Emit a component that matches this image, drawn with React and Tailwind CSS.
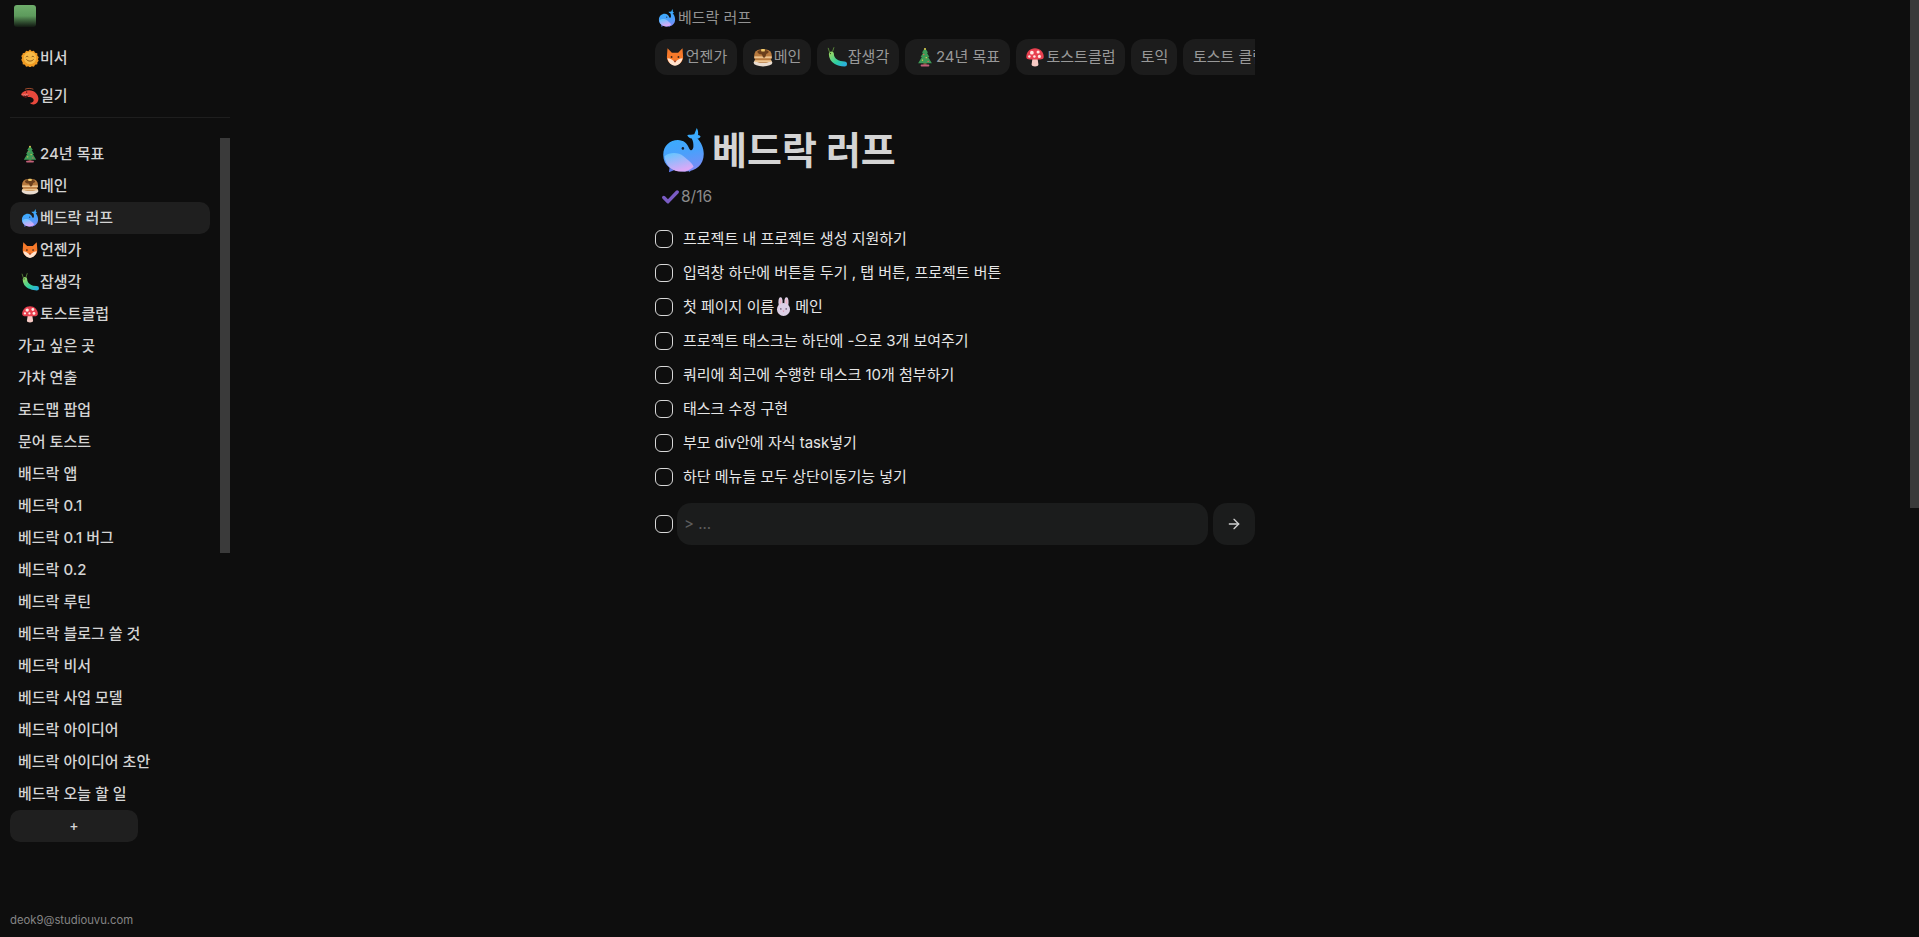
import React from 'react';
import { ArrowRight } from 'lucide-react';

const FONT = '[font-family:Inter,"Noto_Sans_CJK_KR",sans-serif]';

// Fluent style emoji, redrawn small because no emoji font is available
function Emoji({ name, size = 18 }) {
  const shapes = {
    whale: (
      <g transform="translate(1.600 0) scale(0.9 1)">
        <defs>
          <linearGradient id="whaleBody" x1="0.3" y1="0" x2="0.5" y2="1">
            <stop offset="0" stopColor="#2fb4ff" />
            <stop offset="0.6" stopColor="#4aa0fb" />
            <stop offset="1" stopColor="#7b8cf5" />
          </linearGradient>
          <linearGradient id="whaleBelly" x1="0" y1="0" x2="0.4" y2="1">
            <stop offset="0" stopColor="#5cc8ff" />
            <stop offset="1" stopColor="#dca8f7" />
          </linearGradient>
        </defs>
        <path d="M5 28l-.500 3.500 4-1.500zM19 29l2 2.500 1.500-3.500z" fill="#5f78e8" />
        <path d="M0 19C0 12.500 5.500 8.500 11.500 8.500 16 8.500 19 11 20.500 14.500 21.500 16.500 23.500 16 23.800 13.500 24 11 23.500 9 22.500 7.500 21 7.500 19.500 6.500 19 5 21 4.800 23 5 24.500 4.500L26.500 0C27.500 1.500 27.800 3.500 27.500 5 28.500 5.300 29 5.500 29.500 6 29 7 28 7.500 27 7.500 30 10.500 32 14 32 18.500 32 26 26 31 17 31 7 31 0 27 0 19z" fill="url(#whaleBody)" />
        <path d="M1 20C5 17 12 17 16 20 20 23 23 25 24 27.500 21 30 18 31 15 31 7 31 2 27 1 20z" fill="url(#whaleBelly)" />
        <circle cx="15.500" cy="14.500" r="1" fill="#123" />
      </g>
    ),
    fox: (
      <>
        <path d="M4 2l7 7h10l7-7 1 14c0 7-6 13-13 13S3 23 3 16z" fill="#f6792a" />
        <path d="M4 18c4 0 8 2 12 7 4-5 8-7 12-7-1 6-6 12-12 12S5 24 4 18z" fill="#ffe3cf" />
        <circle cx="10.500" cy="16" r="1.500" fill="#3a2418" />
        <circle cx="21.500" cy="16" r="1.500" fill="#3a2418" />
        <path d="M14 22h4l-2 2.500z" fill="#6a2a3a" />
      </>
    ),
    pancake: (
      <>
        <ellipse cx="16" cy="25" rx="15" ry="6" fill="#e9dcd0" />
        <rect x="2" y="4" width="28" height="21" rx="9" fill="#b87a3e" />
        <rect x="2" y="15" width="28" height="3" fill="#eec48e" />
        <rect x="2" y="21" width="28" height="3" rx="1.500" fill="#eec48e" />
        <path d="M7 7c3-3 15-3 18 0 0 4-3 2-4 5s-1 5-3.500 5-2-4-3.500-5-3 0-4-1-3-1-3-4z" fill="#6b3f1c" />
        <rect x="13" y="3" width="6" height="4" rx="1" fill="#f0c86a" />
      </>
    ),
    caterpillar: (
      <>
        <defs>
          <linearGradient id="catBody" x1="0" y1="0" x2="1" y2="1">
            <stop offset="0" stopColor="#8ed66a" />
            <stop offset="0.6" stopColor="#2fcf9f" />
            <stop offset="1" stopColor="#2ab1d8" />
          </linearGradient>
        </defs>
        <path d="M7 11c0 6 3 10 8 13 3 2 8 3 13 3" fill="none" stroke="url(#catBody)" strokeWidth="8" strokeLinecap="round" />
        <path d="M4 8L2 2M9 7l2-6" stroke="#5b8a3c" strokeWidth="1.500" strokeLinecap="round" />
        <circle cx="5.500" cy="10.500" r="1" fill="#24351c" />
      </>
    ),
    tree: (
      <>
        <rect x="13.500" y="25" width="5" height="4" fill="#7b4f35" />
        <rect x="9" y="28" width="14" height="3" rx="1.500" fill="#c2607a" />
        <path d="M16 1l5 8h-2l4 7h-2l6 10H5l6-10H9l4-7h-2z" fill="#3d9a57" />
        <circle cx="16" cy="3" r="1.500" fill="#f7cd4a" />
        <circle cx="14" cy="12" r="1.100" fill="#f45c5c" />
        <circle cx="18" cy="17" r="1.100" fill="#f7cd4a" />
        <circle cx="12" cy="21" r="1.100" fill="#f7cd4a" />
        <circle cx="21" cy="23" r="1.100" fill="#f45c5c" />
      </>
    ),
    mushroom: (
      <>
        <path d="M12 18h8l1.500 10c0 2-2.500 3-5.500 3s-5.500-1-5.500-3z" fill="#f7c9c4" />
        <path d="M2 16C2 8 8 2 16 2s14 6 14 14c0 3-3 4-6 4H8c-3 0-6-1-6-4z" fill="#e8404f" />
        <circle cx="11" cy="9" r="3" fill="#ffe9e4" />
        <circle cx="21" cy="8" r="2.500" fill="#ffe9e4" />
        <circle cx="23" cy="15" r="2.500" fill="#ffe9e4" />
        <circle cx="7" cy="15" r="2" fill="#ffe9e4" />
        <circle cx="15" cy="15" r="2" fill="#ffe9e4" />
      </>
    ),
    sun: (
      <>
        <path d="M16 1l3 3 4-1 2 3.500 4 1v4l2.500 3-1.500 3.500 1.500 3-2.500 3v3l-4 1-2 3.500-4-1-3 2.500-3-2.500-4 1-2-3.500-4-1v-3L.500 19l1.500-3-1.500-3.500L3 9.500v-2l4-1L9 3l4 1z" fill="#f09a22" />
        <circle cx="16" cy="16" r="11" fill="#f7bb48" />
        <path d="M9 14c1-1.500 3-1.500 4 0M19 14c1-1.500 3-1.500 4 0M10 19c3 3.500 9 3.500 12 0" fill="none" stroke="#7a4a14" strokeWidth="1.500" strokeLinecap="round" />
      </>
    ),
    shrimp: (
      <>
        <path d="M0 13C4 6 14 4 21 7c6 2.500 10 8 10 14 0 5-3 9-8 10-3 .5-6-1-7-3 3 0 6-1 6.500-4 .5-3-2-5.500-5-6-3-.5-7 0-9.500 0C4.500 18 1.500 16 0 13z" fill="#e8483c" />
        <path d="M2 14c4 2 8 1 12 0-2 2-1 4-5 5-3 .5-5-2-7-5z" fill="#5a1414" />
        <path d="M3 13l2 2 1.500-1.500 2 1.500 1.500-1.500 2 1" fill="none" stroke="#fff" strokeWidth="0.800" />
        <path d="M7 4c5-2 10-2 15 0" stroke="#e8683c" strokeWidth="1.200" fill="none" />
        <circle cx="10" cy="9" r="1.200" fill="#2a0c0c" />
      </>
    ),
    rabbit: (
      <>
        <ellipse cx="11" cy="9" rx="3.500" ry="8.500" fill="#ddd0e6" />
        <ellipse cx="21" cy="9" rx="3.500" ry="8.500" fill="#ddd0e6" />
        <ellipse cx="11" cy="9" rx="1.500" ry="6" fill="#efb4c6" />
        <ellipse cx="21" cy="9" rx="1.500" ry="6" fill="#efb4c6" />
        <circle cx="16" cy="21" r="11" fill="#ddd0e6" />
        <circle cx="11.500" cy="20" r="1.200" fill="#34243f" />
        <circle cx="20.500" cy="20" r="1.200" fill="#34243f" />
        <path d="M14.500 23h3L16 25z" fill="#d9627f" />
      </>
    ),
  };
  return (
    <svg width={size} height={size} viewBox="0 0 32 32" className="shrink-0">
      {shapes[name]}
    </svg>
  );
}

const emojiItems = [
  ['tree', '24년 목표'],
  ['pancake', '메인'],
  ['whale', '베드락 러프'],
  ['fox', '언젠가'],
  ['caterpillar', '잡생각'],
  ['mushroom', '토스트클럽'],
];

const plainItems = [
  '가고 싶은 곳',
  '가챠 연출',
  '로드맵 팝업',
  '문어 토스트',
  '배드락 앱',
  '베드락 0.1',
  '베드락 0.1 버그',
  '베드락 0.2',
  '베드락 루틴',
  '베드락 블로그 쓸 것',
  '베드락 비서',
  '베드락 사업 모델',
  '베드락 아이디어',
  '베드락 아이디어 초안',
  '베드락 오늘 할 일',
];

const tabs = [
  ['fox', '언젠가', 'w-[82px]'],
  ['pancake', '메인', 'w-[68px]'],
  ['caterpillar', '잡생각', 'w-[82px]'],
  ['tree', '24년 목표', 'w-[105px]'],
  ['mushroom', '토스트클럽', 'w-[109px]'],
  [null, '토익', 'w-[46px]'],
  [null, '토스트 클럽', 'w-[92px]'],
];

const tasks = [
  '프로젝트 내 프로젝트 생성 지원하기',
  '입력창 하단에 버튼들 두기 , 탭 버튼, 프로젝트 버튼',
  <>
    첫 페이지 이름
    <span className="inline-block w-[19px] mr-[2px] align-[-4px]">
      <Emoji name="rabbit" size={19} />
    </span>
    메인
  </>,
  '프로젝트 태스크는 하단에 -으로 3개 보여주기',
  '쿼리에 최근에 수행한 태스크 10개 첨부하기',
  '태스크 수정 구현',
  '부모 div안에 자식 task넣기',
  '하단 메뉴들 모두 상단이동기능 넣기',
];

function SideItem({ emoji, label, active }) {
  return (
    <div
      className={`flex items-center h-[32px] rounded-[10px] text-[15px] font-medium text-[#d4d4d4] ${
        emoji ? 'pl-[11px]' : 'pl-[8px]'
      } ${active ? 'bg-[#1f1f1f]' : ''}`}
    >
      {emoji && <Emoji name={emoji} size={18} />}
      {emoji && <span className="w-[1px]" />}
      <span className="whitespace-nowrap">{label}</span>
    </div>
  );
}

function Checkbox() {
  return <div className="w-[18px] h-[18px] shrink-0 rounded-[6px] border border-[#d8d8d8]" />;
}

export default function App() {
  return (
    <div className={`flex h-[937px] overflow-hidden bg-[#0e0e0e] ${FONT}`}>
      <aside className="w-[230px] shrink-0 pl-[10px] flex flex-col h-full">
        <div className="ml-[4px] mt-[5px] w-[22px] h-[22px] rounded-[3px] bg-gradient-to-b from-[#6fae6c] via-[#5d9a5c] to-[#121a12]" />
        <div className="mt-[15px] flex flex-col gap-[6px] pb-[3px]">
          <SideItem emoji="sun" label="비서" />
          <SideItem emoji="shrimp" label="일기" />
        </div>
        <div className="mt-[2px] h-px bg-[#1e1e1e]" />
        <div className="mt-[20px] flex h-[672px] overflow-hidden">
          <div className="w-[200px] shrink-0">
            {emojiItems.map(([emoji, label]) => (
              <SideItem key={label} emoji={emoji} label={label} active={label === '베드락 러프'} />
            ))}
            {plainItems.map(label => (
              <SideItem key={label} label={label} />
            ))}
          </div>
          <div className="ml-[10px] w-[10px] h-[415px] bg-[#3a3a3a]" />
        </div>
        <button className="w-[128px] h-[32px] shrink-0 rounded-[10px] bg-[#1f1f1f] text-[#d4d4d4] text-sm font-medium">+</button>
        <div className="mt-auto mb-[8px] text-[11.3px] text-[#858585]">deok9@studiouvu.com</div>
      </aside>

      <main className="flex-1 min-w-0 pl-[425px]">
        <div className="w-[600px]">
          <div className="flex items-center h-[18px] mt-[9px] pl-[3px] text-[15px] text-[#939393]">
            <Emoji name="whale" size={18} />
            <span className="ml-[2px]">베드락 러프</span>
          </div>
          <div className="mt-[12px] flex gap-[6px] overflow-hidden">
            {tabs.map(([emoji, label, width]) => (
              <div
                key={label}
                className={`${width} h-[36px] shrink-0 flex items-center justify-center whitespace-nowrap rounded-[12px] bg-[#1c1c1c] text-[15px] text-[#999999]`}
              >
                {emoji && <Emoji name={emoji} size={20} />}
                <span className="ml-[1px]">{label}</span>
              </div>
            ))}
          </div>
          <div className="mt-[51px] flex items-center h-[48px] pl-[6px]">
            <Emoji name="whale" size={45} />
            <h1 className="ml-[6px] text-[38px] font-bold text-[#d4d4d4]">베드락 러프</h1>
          </div>
          <div className="mt-[13px] flex items-center h-[20px] pl-[7px] text-[15.5px] text-[#8a8a8a]">
            <svg width="17" height="14" viewBox="0 0 17 14" className="shrink-0">
              <path d="M1.800 7.500l4.200 4.200 9.200-9.700" fill="none" stroke="#7a5cc4" strokeWidth="3.400" strokeLinecap="round" strokeLinejoin="round" />
            </svg>
            <span className="ml-[2px]">8/16</span>
          </div>
          <div className="mt-[15px]">
            {tasks.map((task, i) => (
              <div key={i} className="flex items-center h-[34px]">
                <Checkbox />
                <span className="ml-[10px] text-[15px] text-[#e6e6e6]">{task}</span>
              </div>
            ))}
          </div>
          <div className="mt-[9px] flex items-center">
            <Checkbox />
            <div className="ml-[4px] w-[531px] h-[42px] flex items-center pl-[7px] pt-[1px] rounded-[14px] bg-[#1b1c1c] text-[15px] text-[#5e5e5e]">
              {'> ...'}
            </div>
            <div className="ml-[5px] w-[42px] h-[42px] flex items-center justify-center rounded-[14px] bg-[#1b1c1c] text-[#cfcfcf]">
              <ArrowRight size={16} />
            </div>
          </div>
        </div>
      </main>

      <div className="w-[9px] shrink-0">
        <div className="h-[508px] bg-[#3a3a3a]" />
      </div>
    </div>
  );
}
